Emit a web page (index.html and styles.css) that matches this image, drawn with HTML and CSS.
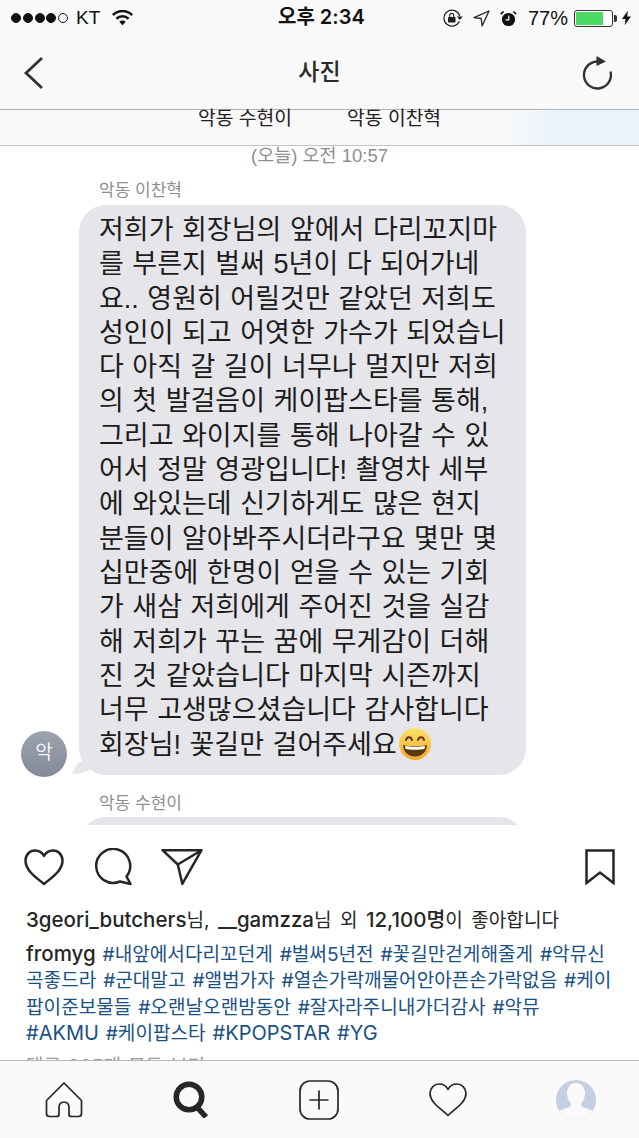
FILE: index.html
```html
<!DOCTYPE html>
<html lang="ko">
<head>
  <meta charset="utf-8">
  <title>사진</title>
  <link rel="stylesheet" href="styles.css">
</head>
<body>
  <div class="phone">
    <!-- Status + Nav -->
    <div class="top-bar">
      <div class="status-bar">
        <div class="status-left">
          <span class="dots"><i></i><i></i><i></i><i></i><i class="off"></i></span>
          <span>KT</span>
          <svg class="wifi" width="21" height="16" viewBox="0 0 22 16"><path d="M11 15.500 7.600 11.900a4.800 4.800 0 0 1 6.800 0zM5.600 9.800 3.700 7.800a10.400 10.400 0 0 1 14.600 0l-1.900 2a7.600 7.600 0 0 0-10.800 0zM1.800 5.800 0 3.900a15.600 15.600 0 0 1 22 0l-1.800 1.900a13 13 0 0 0-18.400 0z" fill="#111"/></svg>
        </div>
        <div class="status-time">오후 2:34</div>
        <div class="status-right">
          <svg width="20" height="18" viewBox="0 0 20 18"><path d="M16.400 12.200A8 8 0 1 1 16.700 7" fill="none" stroke="#222" stroke-width="1.200"/><path d="M13.800 7.500h6l-3 3.400z" fill="#222"/><rect x="5" y="8" width="7.500" height="5.500" rx=".8" fill="#222"/><path d="M6.700 8V6.300a2 2 0 0 1 4 0V8" fill="none" stroke="#222" stroke-width="1.200"/></svg>
          <svg width="17" height="17" viewBox="0 0 17 17"><path d="M16 1 1 7.600l7.200.9.900 7.400z" fill="none" stroke="#222" stroke-width="1.300" stroke-linejoin="round"/></svg>
          <svg width="17" height="17" viewBox="0 0 17 17"><circle cx="8.500" cy="9.500" r="6.600" fill="#111"/><path d="M8.800 5.500v4.400H5.600" fill="none" stroke="#fff" stroke-width="1.200"/><path d="M.8 4.200 3.600 1.500M16.200 4.200l-2.800-2.700" stroke="#111" stroke-width="1.600"/></svg>
          <span class="pct">77%</span>
          <span class="battery"><span class="battery-fill"></span></span>
          <svg class="bolt" width="9" height="16" viewBox="0 0 10 16"><path d="M6.500 0 0 9h4l-1 7 7-9.600H5.800z" fill="#111"/></svg>
        </div>
      </div>
      <div class="nav-bar">
        <svg class="back" width="22" height="34" viewBox="0 0 22 34"><path d="M19 2 3 17l16 15" fill="none" stroke="#333" stroke-width="2.800"/></svg>
        <div class="nav-title">사진</div>
        <svg class="reload" width="32" height="36" viewBox="0 0 32 36"><path d="M28.500 16.500A13.500 13.500 0 1 1 15 6.500" fill="none" stroke="#333" stroke-width="2.400"/><path d="M14.500 1 24 6.500 14.500 11z" fill="#333"/></svg>
      </div>
    </div>

    <!-- Screenshot of the message thread -->
    <div class="photo">
      <div class="tabs"><span>악동 수현이</span><span>악동 이찬혁</span></div>
      <div class="thread">
        <div class="timestamp">(오늘) 오전 10:57</div>
        <div class="sender">악동 이찬혁</div>
        <div class="message">
          <div class="avatar">악</div>
          <div class="bubble">
            <div class="line">저희가 회장님의 앞에서 다리꼬지마</div>
            <div class="line">를 부른지 벌써 5년이 다 되어가네</div>
            <div class="line">요.. 영원히 어릴것만 같았던 저희도</div>
            <div class="line">성인이 되고 어엿한 가수가 되었습니</div>
            <div class="line">다 아직 갈 길이 너무나 멀지만 저희</div>
            <div class="line">의 첫 발걸음이 케이팝스타를 통해,</div>
            <div class="line">그리고 와이지를 통해 나아갈 수 있</div>
            <div class="line">어서 정말 영광입니다! 촬영차 세부</div>
            <div class="line">에 와있는데 신기하게도 많은 현지</div>
            <div class="line">분들이 알아봐주시더라구요 몇만 몇</div>
            <div class="line">십만중에 한명이 얻을 수 있는 기회</div>
            <div class="line">가 새삼 저희에게 주어진 것을 실감</div>
            <div class="line">해 저희가 꾸는 꿈에 무게감이 더해</div>
            <div class="line">진 것 같았습니다 마지막 시즌까지</div>
            <div class="line">너무 고생많으셨습니다 감사합니다</div>
            <div class="line">회장님! 꽃길만 걸어주세요<svg class="emoji" width="34" height="34" viewBox="0 0 34 34"><defs><linearGradient id="face" x1="0" y1="0" x2="0" y2="1"><stop offset="0" stop-color="#fde36a"/><stop offset="1" stop-color="#f4a72a"/></linearGradient></defs><circle cx="17" cy="17" r="16" fill="url(#face)"/><path d="M5 18c5 1.600 19 1.600 24 0-.5 7.500-5.500 11.500-12 11.500S5.500 25.500 5 18z" fill="#5b3a12"/><path d="M7 19c5 1 15 1 20 0l-.6 3c-5 1-13.800 1-18.800 0z" fill="#fff"/><path d="M8 13c1-3.600 5-3.600 6 0M20 13c1-3.600 5-3.600 6 0" fill="none" stroke="#5b3a12" stroke-width="2" stroke-linecap="round"/></svg></div>
          </div>
        </div>
        <div class="sender second">악동 수현이</div>
        <div class="bubble-next"></div>
      </div>
    </div>

    <!-- Post actions -->
    <div class="actions">
      <svg class="like" width="40" height="37" viewBox="0 0 40 37"><path d="M20 35C13 29 1.500 22 1.500 11.500 1.500 5.500 6 1.500 11 1.500c4 0 7.300 2.200 9 5.500 1.700-3.300 5-5.500 9-5.500 5 0 9.500 4 9.500 10C38.500 22 27 29 20 35z" fill="none" stroke="#262626" stroke-width="2.500" stroke-linejoin="round"/></svg>
      <svg class="comment" width="38" height="38" viewBox="0 0 38 38"><path d="M32.500 28.500A17 17 0 1 0 26 33.500L36.500 36z" fill="none" stroke="#262626" stroke-width="2.500" stroke-linejoin="round"/></svg>
      <svg class="send" width="42" height="36" viewBox="0 0 42 36"><path d="M1.500 1.200h39L21.300 34.800 16.800 15.500zM16.800 15.500 40.500 1.200" fill="none" stroke="#262626" stroke-width="2.500" stroke-linejoin="round"/></svg>
      <svg class="save" width="30" height="36" viewBox="0 0 30 36"><path d="M1.500 1.500h27v32.500L15 23.500 1.500 34z" fill="none" stroke="#262626" stroke-width="2.500"/></svg>
    </div>

    <div class="likes"><b>3geori_butchers</b>님, <b>__gamzza</b>님 외 <b>12,100명</b>이 좋아합니다</div>

    <div class="caption">
      <div><b>fromyg</b> <a>#내앞에서다리꼬던게</a> <a>#벌써5년전</a> <a>#꽃길만걷게해줄게</a> <a>#악뮤신</a></div>
      <div><a>곡좋드라</a> <a>#군대말고</a> <a>#앨범가자</a> <a>#열손가락깨물어안아픈손가락없음</a> <a>#케이</a></div>
      <div><a>팝이준보물들</a> <a>#오랜날오랜밤동안</a> <a>#잘자라주니내가더감사</a> <a>#악뮤</a></div>
      <div><a class="latin">#AKMU</a> <a>#케이팝스타</a> <a class="latin">#KPOPSTAR</a> <a class="latin">#YG</a></div>
      <div class="comments-link">댓글 305개 모두 보기</div>
    </div>

    <!-- Tab bar -->
    <div class="tab-bar">
      <svg width="38" height="36" viewBox="0 0 38 36"><path d="M19 1 1.500 18.500v13c0 2 1 3 3 3H12c1.500 0 2-.5 2-2V25a5 5 0 0 1 10 0v7.500c0 1.500.5 2 2 2h7.500c2 0 3-1 3-3v-13z" fill="none" stroke="#262626" stroke-width="1.700" stroke-linejoin="round"/></svg>
      <svg width="37" height="37" viewBox="0 0 37 37"><circle cx="16" cy="16" r="12.800" fill="none" stroke="#262626" stroke-width="5.500"/><path d="M23 25 33 36" stroke="#262626" stroke-width="5.500"/></svg>
      <svg width="40" height="40" viewBox="0 0 40 40"><rect x="1" y="1" width="38" height="38" rx="10" fill="none" stroke="#262626" stroke-width="1.700"/><path d="M20 10.500v19M10.500 20h19" stroke="#262626" stroke-width="1.700"/></svg>
      <svg width="38" height="34" viewBox="0 0 38 34"><path d="M19 32.500C12 25.500 1 19.500 1 10.500 1 5 5.500 1 10 1c4 0 7.300 2 9 5.500C20.700 3 24 1 28 1c4.500 0 9 4 9 9.500 0 9-11 15-18 22z" fill="none" stroke="#262626" stroke-width="1.700" stroke-linejoin="round"/></svg>
      <svg width="40" height="40" viewBox="0 0 40 40"><defs><clipPath id="disc"><circle cx="20" cy="20" r="20"/></clipPath></defs><g clip-path="url(#disc)"><rect width="40" height="40" fill="#c5cfe3"/><path d="M20 3c-5.500 0-9 4.500-9 10 0 4.500 1.500 7.500 3.500 10 1 1.500 0 3.500-1.500 4L0 32v8h40v-8l-13-5c-1.500-.5-2.500-2.500-1.500-4 2-2.500 3.500-5.500 3.500-10 0-5.500-3.500-10-9-10z" fill="#fafafa"/></g></svg>
    </div>
  </div>
</body>
</html>
```

FILE: styles.css
```css
html, body {
  margin: 0;
  padding: 0;
  background: white;
}

.phone {
  width: 639px;
  height: 1138px;
  overflow: hidden;
  display: flex;
  flex-direction: column;
  font-family: "Liberation Sans", "Noto Sans CJK KR", sans-serif;
  color: #262626;
}

.top-bar {
  height: 109px;
  flex: none;
  background: #f9f9f9;
  border-bottom: 1px solid #b2b2b2;
}

.status-bar {
  height: 36px;
  padding: 0 8px 0 11px;
  display: flex;
  align-items: center;
  justify-content: space-between;
  position: relative;
  color: #111;
  font-size: 19px;
}

.status-left {
  display: flex;
  align-items: center;
  gap: 8px;
}

.dots {
  display: flex;
  gap: 1.750px;
}

.dots i {
  width: 10px;
  height: 10px;
  border-radius: 50%;
  background: #111;
  border: 1px solid #111;
  box-sizing: border-box;
}

.dots i.off {
  background: none;
}

.wifi {
  margin-left: 4px;
}

.status-time {
  position: absolute;
  left: 278px;
  top: 5px;
  font-family: Inter, "Noto Sans CJK KR", sans-serif;
  font-weight: 600;
  font-size: 20px;
  line-height: 24px;
  white-space: nowrap;
}

.status-right {
  display: flex;
  align-items: center;
  gap: 10px;
}

.pct {
  margin-left: 1px;
  font-size: 20px;
}

.battery {
  margin: 0 -1px 0 -4px;
  width: 39px;
  height: 17px;
  box-sizing: border-box;
  padding: 1px;
  border: 1px solid #333;
  border-radius: 3px;
  position: relative;
  display: block;
  background: #fff;
}

.battery::after {
  content: "";
  position: absolute;
  right: -5px;
  top: 4px;
  width: 3px;
  height: 7px;
  background: #333;
  border-radius: 0 2px 2px 0;
}

.battery-fill {
  display: block;
  width: 27px;
  height: 100%;
  background: #4cd964;
}

.nav-bar {
  height: 73px;
  display: flex;
  align-items: center;
  justify-content: space-between;
  padding: 0 25px 2px 23px;
  position: relative;
}

.nav-title {
  position: absolute;
  left: 0;
  right: 0;
  top: 21px;
  text-align: center;
  font-size: 23px;
  line-height: 30px;
  font-weight: 500;
  color: #2a2a2a;
}

.photo {
  height: 716px;
  flex: none;
  background: white;
}

.tabs {
  height: 35px;
  background: linear-gradient(90deg, #f9f9f9 0%, #f9f9f9 78%, #e8f3fb 88%, #e8f3fb 100%);
  border-bottom: 1px solid #c4c4c4;
  display: flex;
  gap: 55px;
  padding-left: 198px;
  font-size: 19.300px;
  line-height: 17px;
  color: #222;
}

.thread {
  padding-left: 21px;
}

.timestamp {
  margin-left: -21px;
  text-align: center;
  font-size: 18.500px;
  line-height: 20px;
  color: #8e8e93;
}

.sender {
  margin: 15px 0 0 78px;
  font-size: 17px;
  line-height: 20px;
  color: #8e8e93;
}

.sender.second {
  margin-top: 19px;
}

.message {
  display: flex;
  align-items: flex-end;
  margin-top: 4px;
  gap: 12px;
  position: relative;
}

.avatar {
  width: 46px;
  height: 46px;
  flex: none;
  border-radius: 50%;
  background: linear-gradient(#9da2ae, #84899a);
  color: #f2f2f5;
  font-size: 19px;
  line-height: 44px;
  text-align: center;
  margin-bottom: -2px;
}

.bubble {
  width: 447px;
  height: 570px;
  box-sizing: border-box;
  background: #e5e5ea;
  border-radius: 27px;
  padding: 8px 0 0 20px;
  font-size: 27px;
  line-height: 34.300px;
  word-spacing: 1px;
  color: #1c1c1c;
  position: relative;
}

/* tail at the bottom-left corner */
.bubble::before {
  content: "";
  position: absolute;
  left: -8px;
  bottom: 0;
  width: 30px;
  height: 30px;
  background: #e5e5ea;
  clip-path: polygon(1px 29px, 7px 18px, 15px 15px, 19px 25px, 11px 28px);
}

.line {
  white-space: nowrap;
}

.emoji {
  vertical-align: -7px;
  margin-left: 1px;
}

/* next message, cut off by the edge of the photo */
.bubble-next {
  margin: 3px 0 0 58px;
  width: 447px;
  height: 60px;
  background: #e5e5ea;
  border-radius: 27px;
  clip-path: inset(0 0 52px 0);
}

.actions {
  height: 78px;
  padding-top: 2px;
  flex: none;
  display: flex;
  align-items: center;
}

.like {
  margin-left: 24px;
}

.comment {
  margin-left: 30px;
}

.send {
  margin-left: 29px;
}

.save {
  margin-left: auto;
  margin-right: 24px;
}

.likes, .caption {
  font-family: Inter, "Noto Sans CJK KR", sans-serif;
  font-size: 19.100px;
  word-spacing: 1.500px;
  white-space: nowrap;
}

.likes {
  line-height: 28px;
  padding-left: 26px;
  height: 28px;
  flex: none;
  word-spacing: 3px;
}

.likes b, .caption b {
  font-weight: 500;
}

.likes b {
  font-size: 20.500px;
}

.caption b {
  font-size: 20.500px;
}

.caption {
  margin-top: 7px;
  padding-left: 26px;
  line-height: 26.300px;
  height: 119px;
  flex: none;
  overflow: hidden;
}

.caption a {
  color: #1a5082;
}

.caption a.latin {
  font-size: 20px;
}

.comments-link {
  color: #999;
  margin-top: 7px;
}

.tab-bar {
  flex: none;
  height: 77px;
  background: #fafafa;
  border-top: 1px solid #b8b8b8;
  display: flex;
  align-items: center;
  padding: 0 43px 0 45px;
  justify-content: space-between;
}
```
